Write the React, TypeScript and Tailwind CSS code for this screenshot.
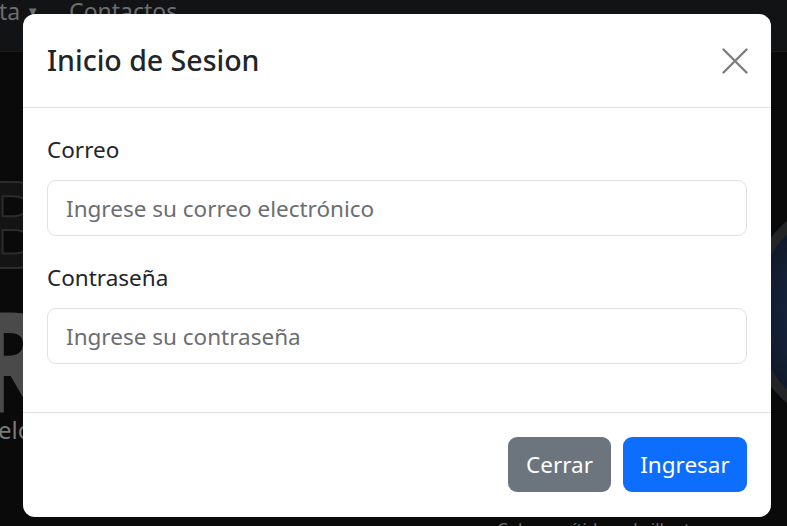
function CloseIcon() {
  return (
    <svg width="26" height="26" viewBox="0 0 26 26" fill="none" stroke="#7d7e80" strokeWidth="2.4" strokeLinecap="round">
      <path d="M1.5 1.5 L24.5 24.5 M24.5 1.5 L1.5 24.5" />
    </svg>
  );
}

function Backdrop() {
  return (
    <div className="absolute inset-0 overflow-hidden bg-[#0a0a0a]">
      <div className="flex h-[52px] items-start gap-[30px] border-b border-[#1c1d1f] bg-[#121315] text-[23px] leading-[24px] text-[#6b6e71]">
        <span className="-ml-[1px] -mt-[1px] flex items-center gap-[6px]">
          ta <span className="text-[13px]">▼</span>
        </span>
        <span className="-mt-[1px]">Contactos</span>
      </div>
      <div className="relative h-[474px]">
        {/* logo on the left, mostly hidden by the modal */}
        <div className="absolute left-[-26px] top-[110px] text-[120px] font-bold leading-none text-[#141414] [-webkit-text-stroke:2px_#2c2c2c]">
          BU
        </div>
        <div className="absolute left-[-34px] top-[236px] text-[140px] font-black leading-none text-[#4a4a4a]">
          R
        </div>
        <div className="absolute left-[-2px] top-[366px] text-[24px] leading-none text-[#7a7a7a]">elo</div>
        {/* gauge on the right */}
        <div className="absolute left-[745px] top-[140px] h-[240px] w-[240px] rounded-full border-[10px] border-[#232426] bg-[radial-gradient(circle,#1d2d48_0%,#142036_55%,#0b0e15_100%)]" />
        <div className="absolute left-[497px] top-[464px] text-[17px] text-[#6a6a6a]">Colores nítidos y brillantes</div>
      </div>
    </div>
  );
}

export default function App() {
  return (
    <div
      className="relative h-[526px] w-[787px] overflow-hidden text-[#212529]"
      style={{ fontFamily: '"Noto Sans", "Open Sans", sans-serif' }}
    >
      <Backdrop />
      <div className="absolute left-[23px] top-[14px] w-[748px] rounded-[12px] bg-white pb-[1px]">
        <div className="flex items-center justify-between border-b border-[#dee2e6] p-[24px]">
          <h5 className="text-[28.5px] font-medium leading-[45px]">Inicio de Sesion</h5>
          <button className="-mr-[1px] flex h-[26px] w-[26px] items-center justify-center">
            <CloseIcon />
          </button>
        </div>
        <div className="p-[24px]">
          <div className="mb-[24px]">
            <label className="mb-[12px] block text-[22.5px] leading-[36px]">Correo</label>
            <input
              className="block h-[56px] w-full rounded-[9px] border-[1.5px] border-[#dee2e6] px-[18px] text-[22.5px] placeholder:text-[#6b6e71]"
              placeholder="Ingrese su correo electrónico"
            />
          </div>
          <div className="mb-[24px]">
            <label className="mb-[12px] block text-[22.5px] leading-[36px]">Contraseña</label>
            <input
              type="password"
              className="block h-[56px] w-full rounded-[9px] border-[1.5px] border-[#dee2e6] px-[18px] text-[22.5px] placeholder:text-[#6b6e71]"
              placeholder="Ingrese su contraseña"
            />
          </div>
        </div>
        <div className="flex justify-end gap-[12px] border-t border-[#dee2e6] px-[18px] py-[18px]">
          <button className="my-[6px] h-[55px] w-[103px] rounded-[9px] bg-[#6c757d] text-[22.5px] text-white">Cerrar</button>
          <button className="my-[6px] mr-[6px] h-[55px] w-[124px] rounded-[9px] bg-[#0d6efd] text-[22.5px] text-white">Ingresar</button>
        </div>
      </div>
    </div>
  );
}
